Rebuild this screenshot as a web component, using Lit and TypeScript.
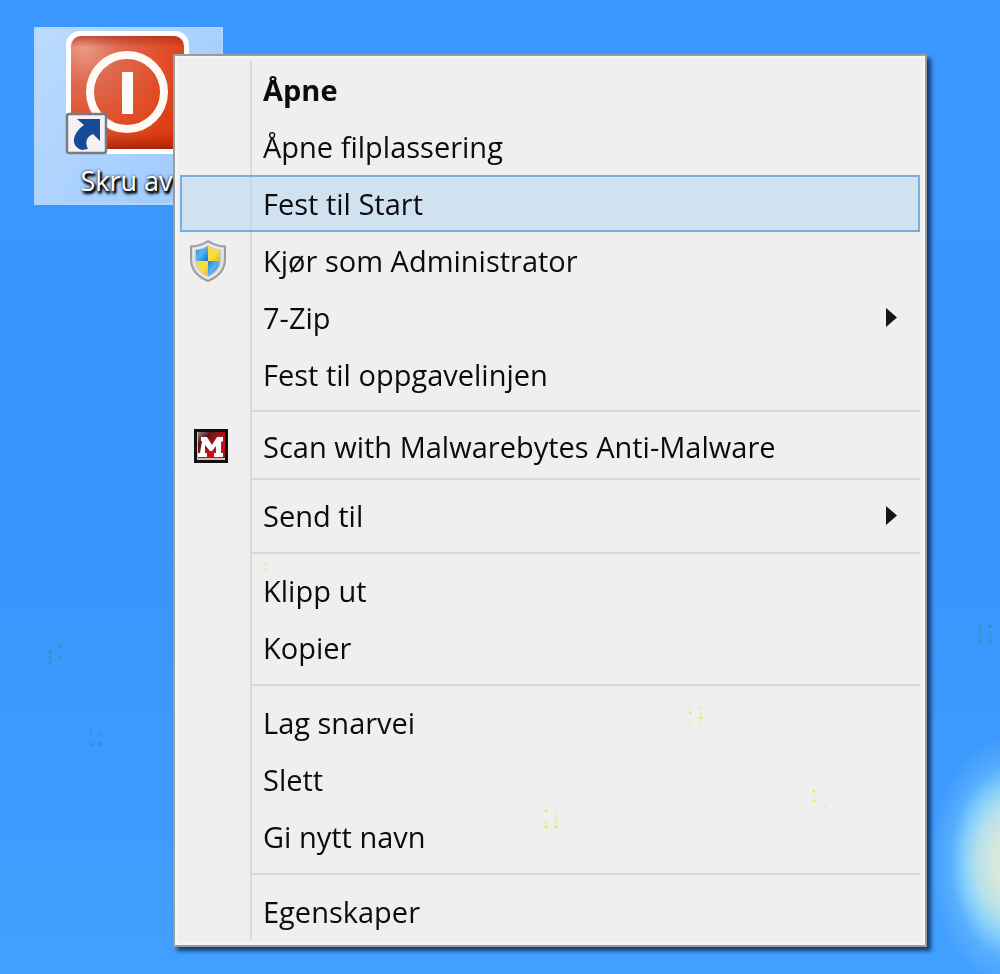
import { LitElement, html, css, svg, nothing } from "lit";
import { customElement, property } from "lit/decorators.js";

type IconName = "shield" | "malware";
interface Entry {
  label: string;
  icon?: IconName;
  bold?: boolean;
  active?: boolean;
  submenu?: boolean;
}
interface Group {
  entries: Entry[];
  spacing?: "snug" | "tight";
}

const GROUPS: Group[] = [
  {
    entries: [
      { label: "Åpne", bold: true },
      { label: "Åpne filplassering" },
      { label: "Fest til Start", active: true },
      { label: "Kjør som Administrator", icon: "shield" },
      { label: "7-Zip", submenu: true },
      { label: "Fest til oppgavelinjen" },
    ],
    spacing: "snug",
  },
  { entries: [{ label: "Scan with Malwarebytes Anti-Malware", icon: "malware" }], spacing: "tight" },
  { entries: [{ label: "Send til", submenu: true }] },
  { entries: [{ label: "Klipp ut" }, { label: "Kopier" }] },
  { entries: [{ label: "Lag snarvei" }, { label: "Slett" }, { label: "Gi nytt navn" }] },
  { entries: [{ label: "Egenskaper" }] },
];

// Stray sparkles of the wallpaper: x, y, strength.
type Speck = [number, number, number];
const GREEN_SPECKS: Speck[] = [
  [50, 652, 0.9], [50, 657, 0.6], [50, 662, 0.7], [60, 646, 0.8], [60, 657, 0.5],
  [91, 729, 0.3], [91, 734, 0.5], [91, 744, 0.8], [101, 734, 0.4], [101, 744, 0.9],
  [980, 626, 0.5], [980, 631, 0.7], [980, 636, 0.5], [980, 641, 0.6],
  [990, 626, 0.9], [990, 631, 0.3], [990, 636, 0.4], [990, 641, 0.6],
];
const YELLOW_SPECKS: Speck[] = [
  [690, 708, 0.3], [690, 713, 0.8], [690, 723, 0.4], [701, 708, 0.4], [701, 713, 0.4], [701, 718, 0.9], [701, 723, 0.4],
  [546, 811, 0.7], [546, 822, 0.5], [546, 827, 0.9], [556, 811, 0.2], [556, 817, 0.4], [556, 822, 0.5], [556, 827, 0.8],
  [814, 791, 0.9], [814, 796, 0.3], [814, 801, 0.7], [825, 792, 0.2], [825, 806, 0.3], [266, 564, 0.5], [266, 569, 0.4],
];

@customElement("menu-icon")
class MenuIcon extends LitElement {
  @property() name?: IconName;
  static styles = css`
    :host { display: flex; width: 40px; height: 44px; }
    svg { width: 100%; height: 100%; }
  `;
  render() {
    if (this.name === "shield") {
      return html`<svg viewBox="0 0 40 44" aria-hidden="true">
        <defs>
          <clipPath id="s"><path d="M20 7C16 9.500 12 11 8 11V20C8 28 12 33 20 37C28 33 32 28 32 20V11C28 11 24 9.500 20 7Z" /></clipPath>
          <linearGradient id="b" x1="0" y1="0" x2="1" y2="1"><stop offset="0" stop-color="#1c84cc" /><stop offset=".45" stop-color="#5db4ec" /><stop offset="1" stop-color="#1670cc" /></linearGradient>
          <linearGradient id="y" x1="0" y1="0" x2="1" y2="1"><stop offset="0" stop-color="#f6d83c" /><stop offset=".5" stop-color="#fade48" /><stop offset="1" stop-color="#eab914" /></linearGradient>
        </defs>
        <path d="M20 2C15 5 9 7.500 3 7.500V20C3 31 10 38 20 42C30 38 37 31 37 20V7.500C31 7.500 25 5 20 2Z" fill="#cfd1d2" stroke="#9c9d9e" stroke-width="2" />
        <path d="M20 5C15 8 10 9.500 5.500 9.500V20C5.500 30 11 35.500 20 39.500C29 35.500 34.500 30 34.500 20V9.500C30 9.500 25 8 20 5Z" fill="none" stroke="#eceded" stroke-width="1.500" />
        <g clip-path="url(#s)">
          <rect x="8" y="7" width="12" height="15" fill="url(#b)" /><rect x="20" y="7" width="12" height="15" fill="url(#y)" />
          <rect x="8" y="22" width="12" height="16" fill="url(#y)" /><rect x="20" y="22" width="12" height="16" fill="url(#b)" />
        </g>
      </svg>`;
    }
    if (this.name === "malware") {
      return html`<svg viewBox="0 0 40 44" aria-hidden="true">
        <defs>
          <linearGradient id="r" x1="0" y1="0" x2="1" y2="1"><stop offset="0" stop-color="#9a9090" /><stop offset=".25" stop-color="#5c1418" /><stop offset=".55" stop-color="#b8141c" /><stop offset=".8" stop-color="#d01018" /><stop offset="1" stop-color="#8e0a10" /></linearGradient>
          <linearGradient id="h" x1="0" y1="0" x2="1" y2="0"><stop offset="0" stop-color="#dedede" /><stop offset=".5" stop-color="#d88c8c" /><stop offset="1" stop-color="#c03038" /></linearGradient>
        </defs>
        <rect x="6" y="4" width="34" height="34" fill="#101010" />
        <rect x="9" y="7" width="28" height="28" fill="url(#r)" />
        <path d="M9 8H37" stroke="url(#h)" stroke-width="2" />
        <path d="M9 34H37" stroke="#e6b8b8" stroke-width="2" /><path d="M9.500 7V34" stroke="#cfc0c0" stroke-width="1" />
        <path d="M13 12H19L24 20L29 12H35V16L33 17V28H35V32H26V28H28V21L24 26H22L17 20V28H19V32H10V28H12L14 16H13Z" fill="#fff" />
      </svg>`;
    }
    return nothing;
  }
}

@customElement("context-menu")
class ContextMenu extends LitElement {
  static styles = css`
    :host { display: block; font-family: "Open Sans", "Noto Sans", sans-serif; font-size: 29px; color: #0b0b10; }
    .menu {
      padding: 5px; border: 2px solid #9b9c9c;
      background: linear-gradient(#dadada, #dadada) 75px 5px / 2px calc(100% - 10px) no-repeat #efefef;
      box-shadow: inset 0 0 0 2px #f6f6f4;
      filter: drop-shadow(4px 4px 2px rgb(0 20 50 / 70%));
    }
    .item {
      display: grid; grid-template-columns: 56px 1fr 24px; align-items: center; column-gap: 20px;
      width: 100%; height: 57px; padding: 0 14px 0 5px; border: 2px solid transparent;
      background: none; font: inherit; color: inherit; text-align: left; white-space: nowrap;
    }
    .active { border-color: #78aedd; background: rgb(170 210 241 / 45%); }
    .bold { font-weight: 700; }
    menu-icon { margin-left: 1px; }
    .arrow { width: 11px; height: 19px; justify-self: end; fill: #161616; margin-right: 7px; }
    .rule { height: 2px; margin: 8px 0 8px 71px; border: 0; background: #d8d8d8; }
    .snug { margin-top: 7px; margin-bottom: 6px; }
    .tight { margin-top: 3px; margin-bottom: 7px; }
  `;
  render() {
    return html`<div class="menu" role="menu">
      ${GROUPS.map(
        (g, i) => html`${g.entries.map(
            (e) => html`<button role="menuitem" class="item ${e.active ? "active" : ""} ${e.bold ? "bold" : ""}">
              <menu-icon .name=${e.icon}></menu-icon><span>${e.label}</span>
              ${e.submenu ? html`<svg class="arrow" viewBox="0 0 11 19" aria-hidden="true"><path d="M0 0L11 9.500L0 19Z" /></svg>` : nothing}
            </button>`
          )}
          ${i < GROUPS.length - 1 ? html`<hr class="rule ${g.spacing ?? ""}" />` : nothing}`
      )}
    </div>`;
  }
}

@customElement("desktop-shortcut")
class DesktopShortcut extends LitElement {
  static styles = css`
    :host { display: block; font-family: "Open Sans", "Noto Sans", sans-serif; }
    .tile {
      display: flex; flex-direction: column; align-items: center; box-sizing: border-box; width: 100%; padding: 2px 4px 4px 0;
      border: 2px solid #b4d5fa; background: linear-gradient(125deg, #bbdafd, #9cc9ff);
      font: inherit; font-size: 27px; line-height: 36px; color: #fff;
      text-shadow: 2px 2px 2px #000, 1px 3px 3px #000, 0 0 3px #223;
    }
    svg { width: 126px; height: 126px; flex: none; }
    span { margin-top: 6px; }
  `;
  render() {
    return html`<button class="tile">
      <svg viewBox="0 0 126 126" aria-hidden="true">
        <defs>
          <radialGradient id="p" cx=".12" cy=".1" r="1.1"><stop offset="0" stop-color="#ec9a88" /><stop offset=".28" stop-color="#de6a50" /><stop offset=".65" stop-color="#e04e28" /><stop offset="1" stop-color="#d83a10" /></radialGradient>
          <linearGradient id="e" x1="0" y1="0" x2="0" y2="1"><stop offset="0" stop-color="#a82412" stop-opacity=".6" /><stop offset=".1" stop-color="#a82412" stop-opacity="0" /><stop offset=".85" stop-color="#b82808" stop-opacity="0" /><stop offset="1" stop-color="#a01c04" stop-opacity=".8" /></linearGradient>
        </defs>
        <rect x="2" y="0" width="123" height="123" rx="14" fill="#fff" />
        <rect x="7" y="5" width="113" height="113" rx="10" fill="url(#p)" />
        <rect x="7" y="5" width="113" height="113" rx="10" fill="url(#e)" />
        <circle cx="63" cy="61" r="37" fill="none" stroke="#fffaf5" stroke-width="8" />
        <rect x="58" y="41" width="11" height="42" fill="#fffaf5" />
        <rect x="3" y="83" width="39" height="39" rx="2" fill="#f5f1f4" stroke="#777c82" stroke-width="2.500" />
        <path d="M13 88H36V110L29 103C24 105 20 110 24 118L18 119C7 116 7 103 20 94Z" fill="#174c94" />
      </svg>
      <span>Skru av</span>
    </button>`;
  }
}

@customElement("app-root")
class AppRoot extends LitElement {
  static styles = css`
    :host { display: block; }
    .desktop {
      position: relative; min-height: 100vh; overflow: hidden;
      background: radial-gradient(ellipse 84px 128px at 1014px 862px, #e6ebdc 0%, #d6e7dd 25%, #b4e0ec 45%, #84cffc 60%, rgb(104 186 255 / 60%) 76%, transparent 100%),
        linear-gradient(#3b98fe, #3994fc 55%, #41a0ff);
    }
    .shortcut { position: absolute; left: 34px; top: 27px; width: 189px; }
    .menu { position: absolute; left: 173px; top: 54px; width: 754px; }
    .specks { position: absolute; inset: 0; width: 100%; height: 100%; pointer-events: none; }
  `;
  private specks(items: Speck[], color: string) {
    return items.map(([x, y, o]) => svg`<circle cx=${x} cy=${y} r="1.500" fill=${color} opacity=${o} />`);
  }
  render() {
    return html`<main class="desktop">
      <desktop-shortcut class="shortcut"></desktop-shortcut>
      <context-menu class="menu"></context-menu>
      <svg class="specks" aria-hidden="true">${this.specks(GREEN_SPECKS, "#22978c")}${this.specks(YELLOW_SPECKS, "#e6e83a")}</svg>
    </main>`;
  }
}
